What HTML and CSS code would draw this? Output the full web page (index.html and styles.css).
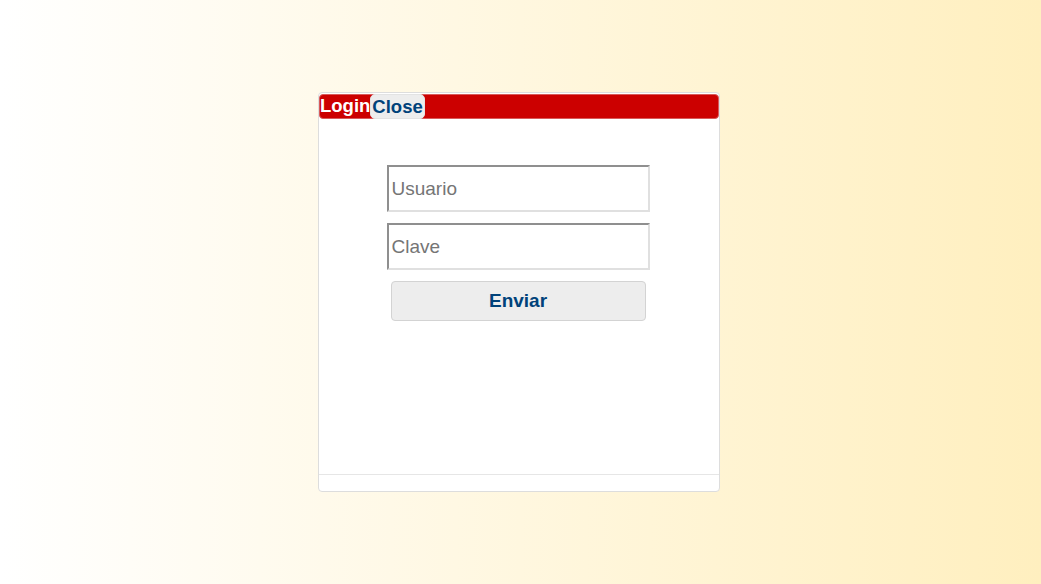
FILE: index.html
```html
<!DOCTYPE html>
<html lang="es">
<head>
<meta charset="utf-8">
<title>Login</title>
<link rel="stylesheet" href="styles.css">
</head>
<body>
<div class="page">
  <div class="dialog">
    <div class="titlebar">
      <span class="title">Login</span>
      <button class="close" type="button">Close</button>
    </div>
    <div class="content">
      <form class="form">
        <input class="field" type="text" placeholder="Usuario">
        <input class="field" type="password" placeholder="Clave">
        <button class="submit" type="button">Enviar</button>
      </form>
    </div>
    <div class="footer"></div>
  </div>
</div>
</body>
</html>
```
FILE: styles.css
```css
html, body {
  margin: 0;
  height: 100%;
}
body {
  background: linear-gradient(to right, #ffffff 0%, #ffefbf 100%);
  font-family: "Liberation Sans", Arial, sans-serif;
}
.page {
  padding-top: 92px;
  padding-left: 318px;
}
.dialog {
  width: 398px;
  padding: 1px;
  border: 1px solid #dddddd;
  border-radius: 4px;
  background: #ffffff;
}
.titlebar {
  display: flex;
  align-items: stretch;
  height: 25px;
  background: #cc0000;
  border: 1px solid #d85a5a;
  border-radius: 4px;
  box-sizing: border-box;
  margin: 0 -1px;
}
.title {
  color: #ffffff;
  font-weight: bold;
  font-size: 18.5px;
  line-height: 21px;
}
.close {
  margin: -1px 0;
  padding: 0 1px;
  border: 1px solid #e3e3e3;
  border-radius: 5px;
  background: #ededed;
  color: #00427a;
  font-family: "Liberation Sans", Arial, sans-serif;
  font-weight: bold;
  font-size: 18.5px;
  line-height: 20px;
}
.content {
  height: 355px;
  box-sizing: border-box;
  padding-top: 46px;
}
.form {
  display: flex;
  flex-direction: column;
  align-items: center;
  gap: 11px;
  padding-right: 2px;
}
.field {
  width: 263px;
  height: 47px;
  box-sizing: border-box;
  margin: 0;
  padding: 1px 3px;
  border: 2px solid;
  border-color: #8f8f8f #e0e0e0 #e0e0e0 #8f8f8f;
  background: #ffffff;
  font-family: "Liberation Sans", Arial, sans-serif;
  font-size: 19px;
  color: #333333;
}
.field::placeholder {
  color: #757575;
}
.submit {
  width: 255px;
  height: 40px;
  margin: 0;
  border: 1px solid #d3d3d3;
  border-radius: 4px;
  background: #ededed;
  color: #00427a;
  font-family: "Liberation Sans", Arial, sans-serif;
  font-weight: bold;
  font-size: 19px;
}
.footer {
  height: 15px;
  border-top: 1px solid #e6e6e6;
  margin: 0 -1px;
}
```
